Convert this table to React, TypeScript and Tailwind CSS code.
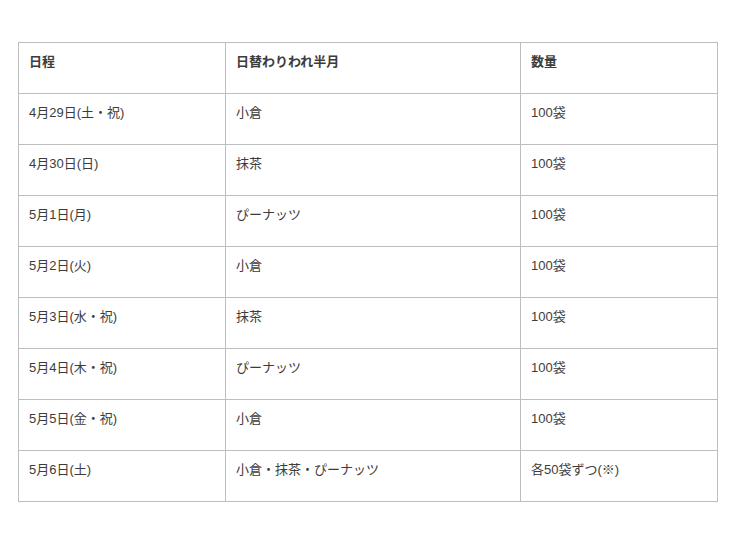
import React from 'react';

const rows = [
  ['4月29日(土・祝)', '小倉', '100袋'],
  ['4月30日(日)', '抹茶', '100袋'],
  ['5月1日(月)', 'ぴーナッツ', '100袋'],
  ['5月2日(火)', '小倉', '100袋'],
  ['5月3日(水・祝)', '抹茶', '100袋'],
  ['5月4日(木・祝)', 'ぴーナッツ', '100袋'],
  ['5月5日(金・祝)', '小倉', '100袋'],
  ['5月6日(土)', '小倉・抹茶・ぴーナッツ', '各50袋ずつ(※)'],
];

export default function App() {
  return (
    <div className="min-h-[542px] w-[740px] bg-white pl-[18px] pt-[42px] text-[13px] text-[#3c3c3c] [font-family:'Liberation_Sans','Noto_Sans_CJK_JP',sans-serif]">
      <table className="w-[699px] table-fixed border-collapse">
        <colgroup>
          <col className="w-[207px]" />
          <col className="w-[295px]" />
          <col className="w-[197px]" />
        </colgroup>
        <thead>
          <tr className="h-[51px]">
            <th className="border border-[#bdbdbd] px-[10px] pt-[9px] text-left align-top font-bold">日程</th>
            <th className="border border-[#bdbdbd] px-[10px] pt-[9px] text-left align-top font-bold">日替わりわれ半月</th>
            <th className="border border-[#bdbdbd] px-[10px] pt-[9px] text-left align-top font-bold">数量</th>
          </tr>
        </thead>
        <tbody>
          {rows.map((r, i) => (
            <tr key={i} className="h-[51px]">
              {r.map((c, j) => (
                <td key={j} className="border border-[#bdbdbd] px-[10px] pt-[9px] align-top">
                  {c}
                </td>
              ))}
            </tr>
          ))}
        </tbody>
      </table>
    </div>
  );
}
